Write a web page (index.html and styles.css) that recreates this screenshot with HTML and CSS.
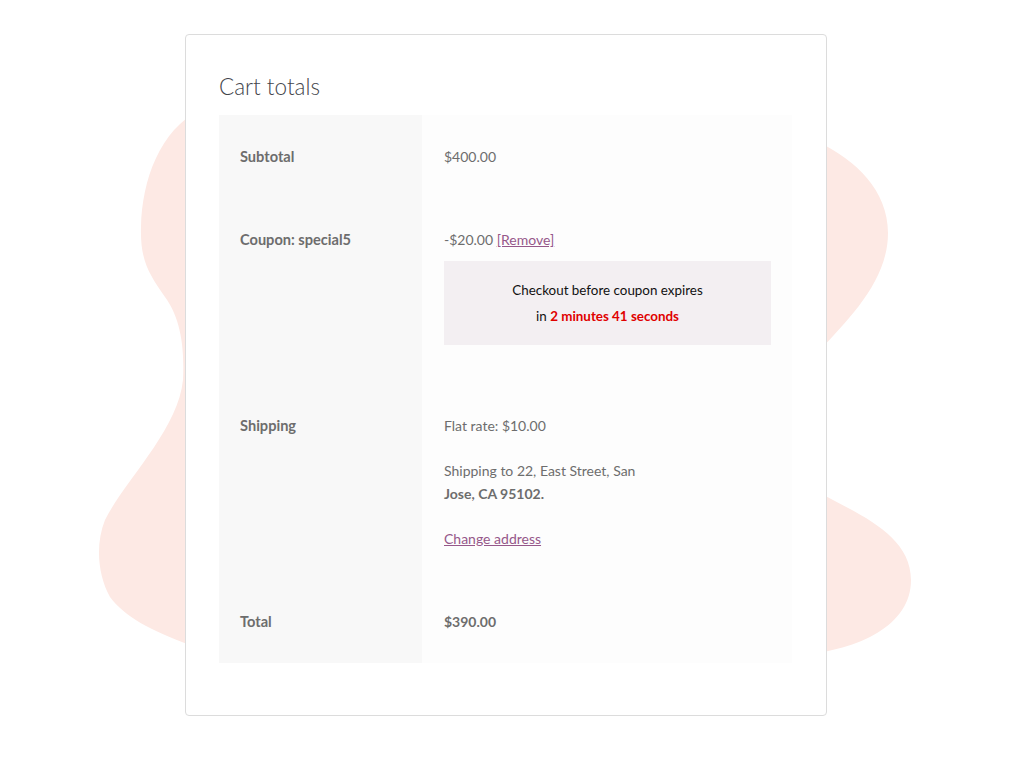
FILE: index.html
```html
<!DOCTYPE html>
<html>
<head>
<meta charset="utf-8">
<title>Cart totals</title>
<link rel="stylesheet" href="styles.css">
</head>
<body>
<div class="page">
  <svg class="blob" width="1024" height="780" viewBox="0 0 1024 780" aria-hidden="true">
    <path d="M200 110 C160 130 142 180 141 227 C140 262 150 275 165 297 C178 315 185 340 183 380 C178 430 125 480 105 520 C95 545 98 575 110 597 C125 617 150 630 190 645 L500 660 L800 655 C860 650 911 625 911 580 C911 535 860 515 820 493 L820 350 C850 318 888 280 888 233 C888 190 855 160 820 143 L500 100 Z"/>
  </svg>
  <div class="card">
    <h2 class="title">Cart totals</h2>
    <table class="totals">
      <tr class="row-sub">
        <th>Subtotal</th>
        <td>$400.00</td>
      </tr>
      <tr class="row-coupon">
        <th>Coupon: special5</th>
        <td>
          <div>-$20.00 <a href="#" class="link">[Remove]</a></div>
          <div class="notice">
            <div>Checkout before coupon expires</div>
            <div>in <strong class="countdown">2 minutes 41 seconds</strong></div>
          </div>
        </td>
      </tr>
      <tr class="row-ship">
        <th>Shipping</th>
        <td>
          <ul class="methods"><li>Flat rate: $10.00</li></ul>
          <p class="dest">Shipping to 22, East Street, San<br><strong>Jose, CA 95102.</strong></p>
          <a href="#" class="link">Change address</a>
        </td>
      </tr>
      <tr class="row-total">
        <th>Total</th>
        <td><strong>$390.00</strong></td>
      </tr>
    </table>
  </div>
</div>
</body>
</html>
```

FILE: styles.css
```css
* { box-sizing: border-box; }
html, body { margin: 0; padding: 0; background: #ffffff; }
body {
  font-family: "Lato", "Liberation Sans", sans-serif;
  font-size: 14px;
  line-height: 23px;
  color: #6d6d6d;
}
.page {
  position: relative;
  width: 1024px;
  height: 780px;
  padding-top: 34px;
}
.blob {
  position: absolute;
  left: 0;
  top: 0;
  z-index: 0;
}
.blob path { fill: #fde9e4; }
.card {
  position: relative;
  z-index: 1;
  margin-left: 185px;
  width: 642px;
  height: 682px;
  background: #ffffff;
  border: 1px solid #dcdcdc;
  border-radius: 4px;
  padding: 37px 34px 53px 33px;
}
.title {
  margin: 0 0 13px;
  font-size: 22.5px;
  line-height: 30px;
  font-weight: 300;
  color: #43454b;
}
.totals {
  width: 573px;
  border-collapse: collapse;
  border-spacing: 0;
  table-layout: fixed;
}
.totals th, .totals td {
  vertical-align: top;
  text-align: left;
  padding: 30px 21px 30px 22px;
}
.totals th {
  width: 203px;
  padding-left: 21px;
  background: #f8f8f8;
  font-weight: 700;
  font-size: 14.6px;
  color: #6d6d6d;
}
.totals td { background: #fdfdfd; }
.link { color: #96588a; text-decoration: underline; }
.notice {
  margin: 10px 0 9px;
  padding: 16px 10px;
  background: #f3eff2;
  color: #111111;
  text-align: center;
  line-height: 26px;
  font-size: 13.4px;
}
.countdown { color: #e00000; font-weight: 700; }
.methods { list-style: none; margin: 0 0 21.5px; padding: 0; }
.dest { margin: 0 0 22px; }
```
